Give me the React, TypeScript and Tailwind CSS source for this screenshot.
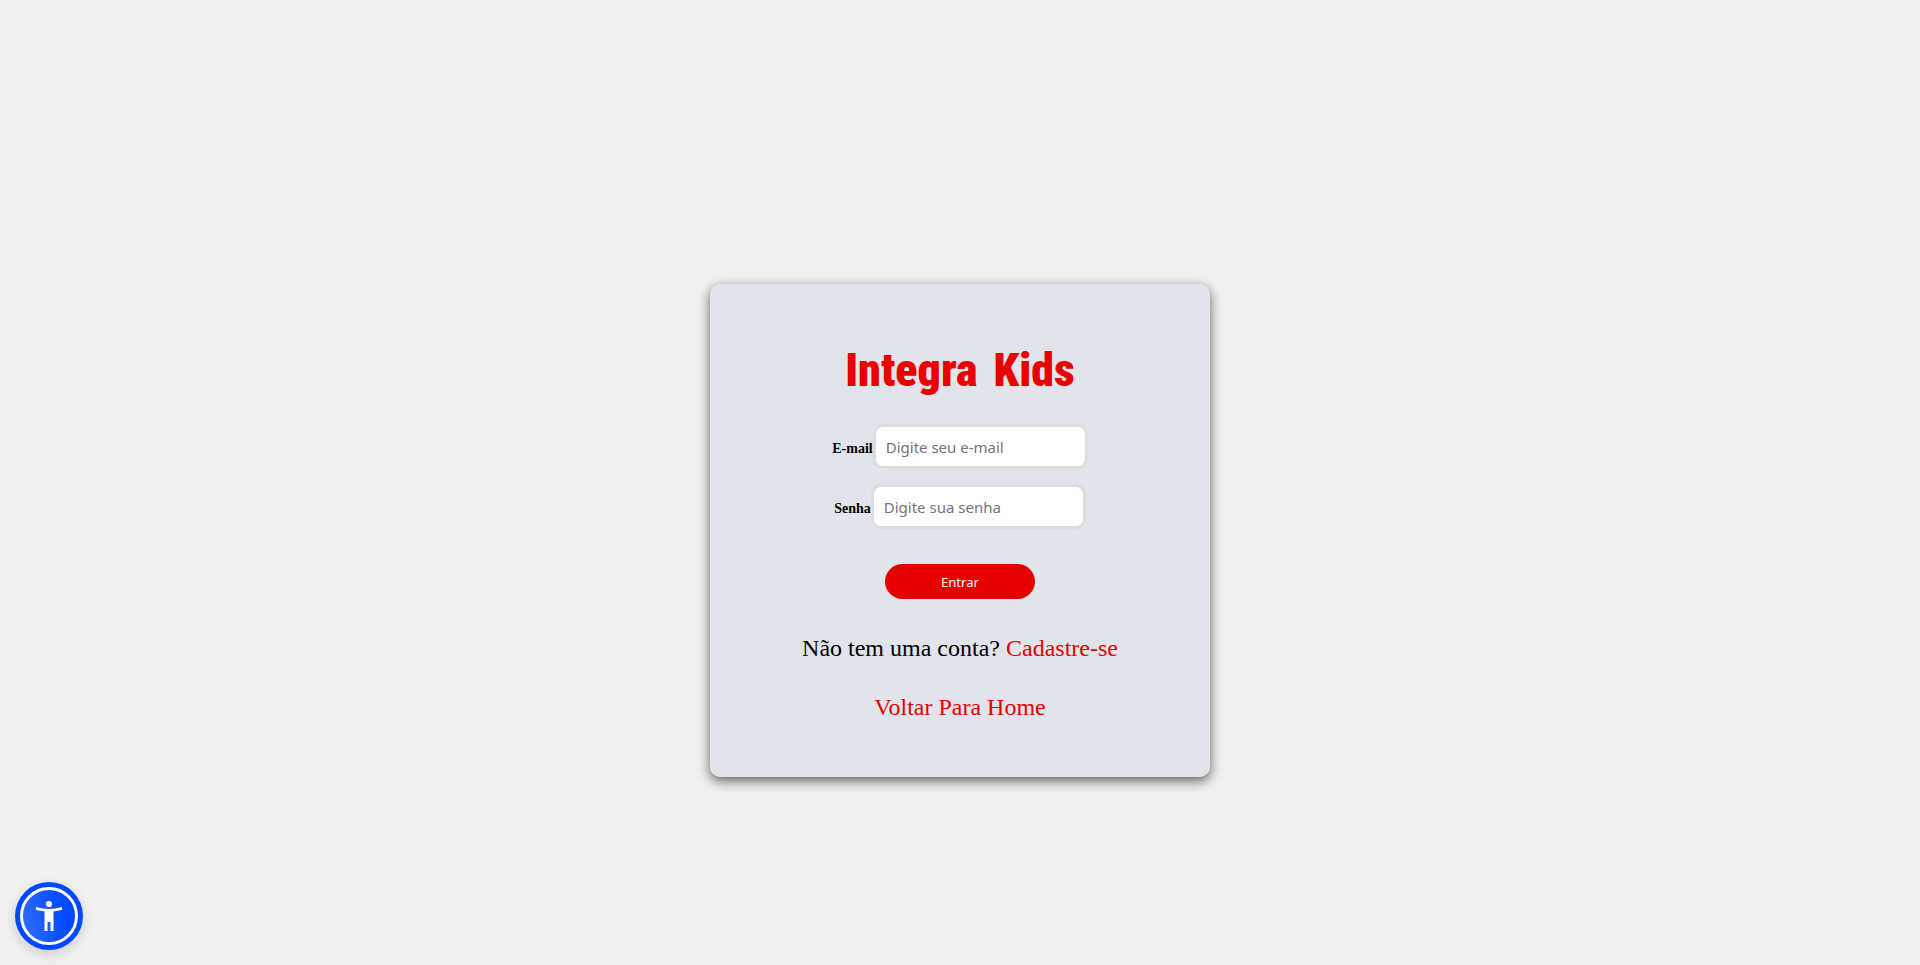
const inputClass =
  'h-[45px] w-[215px] rounded-[10px] border-[3px] border-[#dddddd] bg-white px-2.5 font-["Noto_Sans",sans-serif] text-[15px] text-black placeholder:text-[#757575] outline-none';

function AccessibilityButton() {
  return (
    <button
      type="button"
      aria-label="Acessibilidade"
      className="fixed bottom-[15px] left-[15px] size-[68px] rounded-full bg-[#0048ff] shadow-[0_4px_12px_rgba(0,0,0,0.15)]"
    >
      <svg viewBox="0 0 68 68" className="size-full" aria-hidden="true">
        <defs>
          <linearGradient id="disc" x1="0" y1="0.6" x2="1" y2="0.4">
            <stop offset="0" stopColor="#2f6bff" />
            <stop offset="0.85" stopColor="#0048ff" />
          </linearGradient>
        </defs>
        <circle cx="34" cy="34" r="27.5" fill="url(#disc)" stroke="#fff" strokeWidth="3" />
        <circle cx="34" cy="22" r="3.1" fill="#fff" />
        <path
          d="M21.2 25 C29 27.5 39 27.5 46.8 25 L47.4 27.8 C44.5 28.7 41.5 29.2 38.5 29.5 V49 H35.5 V40 H32.5 V49 H29.5 V29.5 C26.5 29.2 23.5 28.7 20.6 27.8 Z"
          fill="#fff"
        />
      </svg>
    </button>
  );
}

export default function App() {
  return (
    <div className='flex min-h-screen flex-col items-center justify-center bg-[#f0f0f0] pt-24 font-["Liberation_Serif",serif] text-black'>
      <main className="flex w-full max-w-[500px] flex-col items-center rounded-[10px] bg-[#e1e4eb] pt-14 pb-14 shadow-[0_4px_12px_rgba(0,0,0,0.6)]">
        <h1 className='flex gap-4 font-["Roboto_Condensed","Liberation_Sans",sans-serif] text-[46px] leading-[60px] font-black text-[#eb0000]'>
          <span>Integra</span> <span>Kids</span>
        </h1>
        <form className="mt-6 flex flex-col items-center" onSubmit={(e) => e.preventDefault()}>
          <div className="flex items-center">
            <label htmlFor="email" className="pt-1 text-sm font-bold">
              E-mail
            </label>
            <input id="email" type="email" placeholder="Digite seu e-mail" className={inputClass} />
          </div>
          <div className="mt-[15px] flex items-center">
            <label htmlFor="senha" className="pt-1 text-sm font-bold">
              Senha
            </label>
            <input id="senha" type="password" placeholder="Digite sua senha" className={inputClass} />
          </div>
          <button
            type="submit"
            className='mt-[35px] h-[35px] w-[150px] rounded-full bg-[#e60000] pt-0.5 font-["Noto_Sans",sans-serif] text-[13px] text-white'
          >
            Entrar
          </button>
        </form>
        <p className="mt-[35px] text-2xl leading-7">
          Não tem uma conta?{' '}
          <a href="#cadastro" className="text-[#e60000]">
            Cadastre-se
          </a>
        </p>
        <a href="#home" className="mt-[31px] text-2xl leading-7 text-[#e60000]">
          Voltar Para Home
        </a>
      </main>
      <AccessibilityButton />
    </div>
  );
}
